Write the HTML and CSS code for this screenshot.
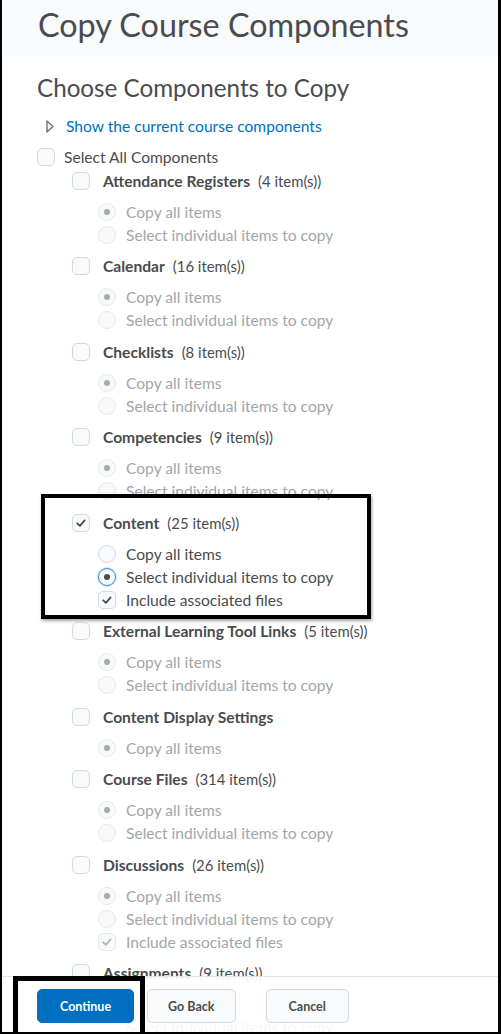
FILE: index.html
```html
<!DOCTYPE html>
<html lang="en">
<head>
  <meta charset="UTF-8">
  <title>Copy Course Components</title>
  <link rel="stylesheet" href="styles.css">
</head>
<body>
<div class="frame">

  <header class="page-head">
    <h1>Copy Course Components</h1>
  </header>

  <main class="page-body">
    <h2>Choose Components to Copy</h2>

    <div class="toggle">
      <svg class="tri" width="8" height="13" viewBox="0 0 8 13"><path d="M1 1 L7 6.5 L1 12 Z" fill="none" stroke="#6e7376" stroke-width="1.4" stroke-linejoin="round"/></svg>
      <a href="#">Show the current course components</a>
    </div>

    <div class="row select-all"><span class="cbox"></span>Select All Components</div>

    <ul class="components">
      <li class="comp">
        <div class="row head"><span class="cbox"></span><b>Attendance Registers</b><span class="count">(4 item(s))</span></div>
        <div class="opts">
          <div class="row opt off"><span class="radio dot"></span>Copy all items</div>
          <div class="row opt off"><span class="radio"></span>Select individual items to copy</div>
        </div>
      </li>
      <li class="comp">
        <div class="row head"><span class="cbox"></span><b>Calendar</b><span class="count">(16 item(s))</span></div>
        <div class="opts">
          <div class="row opt off"><span class="radio dot"></span>Copy all items</div>
          <div class="row opt off"><span class="radio"></span>Select individual items to copy</div>
        </div>
      </li>
      <li class="comp">
        <div class="row head"><span class="cbox"></span><b>Checklists</b><span class="count">(8 item(s))</span></div>
        <div class="opts">
          <div class="row opt off"><span class="radio dot"></span>Copy all items</div>
          <div class="row opt off"><span class="radio"></span>Select individual items to copy</div>
        </div>
      </li>
      <li class="comp">
        <div class="row head"><span class="cbox"></span><b>Competencies</b><span class="count">(9 item(s))</span></div>
        <div class="opts">
          <div class="row opt off"><span class="radio dot"></span>Copy all items</div>
          <div class="row opt off"><span class="radio"></span>Select individual items to copy</div>
        </div>
      </li>
      <li class="comp marked">
        <div class="row head"><span class="cbox ticked"></span><b>Content</b><span class="count">(25 item(s))</span></div>
        <div class="opts">
          <div class="row opt"><span class="radio"></span>Copy all items</div>
          <div class="row opt"><span class="radio dot chosen"></span>Select individual items to copy</div>
          <div class="row opt"><span class="cbox ticked"></span>Include associated files</div>
        </div>
      </li>
      <li class="comp">
        <div class="row head"><span class="cbox"></span><b>External Learning Tool Links</b><span class="count">(5 item(s))</span></div>
        <div class="opts">
          <div class="row opt off"><span class="radio dot"></span>Copy all items</div>
          <div class="row opt off"><span class="radio"></span>Select individual items to copy</div>
        </div>
      </li>
      <li class="comp">
        <div class="row head"><span class="cbox"></span><b>Content Display Settings</b></div>
        <div class="opts">
          <div class="row opt off"><span class="radio dot"></span>Copy all items</div>
        </div>
      </li>
      <li class="comp">
        <div class="row head"><span class="cbox"></span><b>Course Files</b><span class="count">(314 item(s))</span></div>
        <div class="opts">
          <div class="row opt off"><span class="radio dot"></span>Copy all items</div>
          <div class="row opt off"><span class="radio"></span>Select individual items to copy</div>
        </div>
      </li>
      <li class="comp">
        <div class="row head"><span class="cbox"></span><b>Discussions</b><span class="count">(26 item(s))</span></div>
        <div class="opts">
          <div class="row opt off"><span class="radio dot"></span>Copy all items</div>
          <div class="row opt off"><span class="radio"></span>Select individual items to copy</div>
          <div class="row opt off"><span class="cbox ticked"></span>Include associated files</div>
        </div>
      </li>
      <li class="comp">
        <div class="row head"><span class="cbox"></span><b>Assignments</b><span class="count">(9 item(s))</span></div>
        <div class="opts">
          <div class="row opt off"><span class="radio dot"></span>Copy all items</div>
          <div class="row opt off"><span class="radio"></span>Select individual items to copy</div>
        </div>
      </li>
    </ul>
  </main>

  <!-- sticky button bar, see-through like the original -->
  <footer class="actions">
    <button class="btn primary marked" type="button">Continue</button>
    <button class="btn back" type="button">Go Back</button>
    <button class="btn cancel" type="button">Cancel</button>
  </footer>

</div>
</body>
</html>
```

FILE: styles.css
```css
html, body {
   margin: 0;
   padding: 0;
   background: #fff;
}

body {
   font-family: Lato, "Open Sans", "Liberation Sans", sans-serif;
   color: #494c4e;
}

.frame {
   position: relative;
   box-sizing: border-box;
   height: 1034px;
   overflow: hidden;
   border-left: 2px solid #000;
   border-right: 3px solid #000;
   border-bottom: 2px solid #000;
}

/* title strip */
.page-head {
   height: 56px;
   padding-left: 36px;
   background: #f9fafb;
}

.page-head h1 {
   margin: 0;
   padding-top: 9px;
   font-size: 32.3px;
   line-height: 32px;
   font-weight: 400;
}

.page-body {
   padding-left: 35px;
}

.page-body h2 {
   margin: 17px 0 0 0;
   font-size: 24.2px;
   line-height: 30px;
   font-weight: 400;
}

.toggle {
   display: flex;
   align-items: center;
   height: 20px;
   margin-top: 13px;
   padding-left: 9px;
   font-size: 15.6px;
}

.toggle .tri {
   margin-right: 12px;
}

.toggle a {
   color: #006fbf;
   text-decoration: none;
}

/* generic row: box + label */
.row {
   display: flex;
   align-items: center;
   height: 23px;
   font-size: 15.6px;
   white-space: nowrap;
}

.select-all {
   margin-top: 9px;
}

.select-all .cbox {
   margin-right: 9px;
}

.cbox,
.radio {
   flex: none;
   box-sizing: border-box;
   width: 18px;
   height: 18px;
   border: 1px solid #d3d9e3;
   background: #f9fafb;
}

.cbox {
   border-radius: 5px;
}

.radio {
   border-radius: 50%;
   position: relative;
}

.radio.dot::after {
   content: "";
   position: absolute;
   left: 5px;
   top: 5px;
   width: 6px;
   height: 6px;
   border-radius: 50%;
   background: #494c4e;
}

.radio.chosen {
   border-color: #2f8fd6;
   box-shadow: 0 0 0 1px #cfe5f6;
}

.cbox.ticked {
   background: #f9fafb url("data:image/svg+xml;utf8,<svg xmlns='http://www.w3.org/2000/svg' width='16' height='16' viewBox='0 0 16 16'><path d='M4.2 8.3 L6.9 10.8 L11.6 5.4' fill='none' stroke='%23494c4e' stroke-width='1.8' stroke-linecap='round' stroke-linejoin='round'/></svg>") center / 16px no-repeat;
}

.components {
   list-style: none;
   margin: 1px 0 0;
   padding: 0 0 0 35px;
}

.comp {
   position: relative;
   padding-bottom: 8.5px;
}

.head .cbox {
   margin-right: 13px;
}

.head b {
   font-weight: 700;
}

.count {
   margin-left: 8px;
   font-size: 14.9px;
}

.opts {
   margin-top: 8px;
   padding-left: 26px;
}

.opt .radio,
.opt .cbox {
   margin-right: 10px;
}

/* disabled options */
.opt.off {
   color: #a3a6a9;
}

.opt.off .radio,
.opt.off .cbox {
   border-color: #e6e8eb;
   background-color: #f8f9fa;
}

.opt.off .radio.dot::after {
   background: #a8abae;
}

.opt.off .cbox.ticked {
   background-image: url("data:image/svg+xml;utf8,<svg xmlns='http://www.w3.org/2000/svg' width='16' height='16' viewBox='0 0 16 16'><path d='M4.2 8.3 L6.9 10.8 L11.6 5.4' fill='none' stroke='%23b4b7ba' stroke-width='1.8' stroke-linecap='round' stroke-linejoin='round'/></svg>");
}

/* black annotation frames drawn over the page */
.comp.marked::after {
   content: "";
   position: absolute;
   left: -31px;
   width: 330px;
   box-sizing: border-box;
   top: -17px;
   bottom: 1px;
   border: 4px solid #000;
   box-shadow: 1px 2px 3px rgba(0, 0, 0, 0.35);
   pointer-events: none;
}

.actions {
   position: absolute;
   left: 0;
   right: 0;
   bottom: 0;
   height: 56px;
   box-sizing: border-box;
   padding: 12px 0 0 35px;
   display: flex;
   align-items: flex-start;
   background: rgba(255, 255, 255, 0.9);
   border-top: 1px solid #e3e5e8;
}

.btn {
   position: relative;
   height: 34px;
   padding: 0 22px;
   margin-right: 13px;
   border: 1px solid #d3d9e3;
   border-radius: 5px;
   background: #f9fafb;
   color: #494c4e;
   font-family: Lato, "Open Sans", "Liberation Sans", sans-serif;
   font-size: 12.5px;
   font-weight: 700;
}

.btn.primary {
   background: #006fbf;
   border-color: #006fbf;
   color: #fff;
}

.btn.back {
   padding: 0 20px;
}

.btn.cancel {
   margin-left: 17px;
}

.btn.marked::after {
   content: "";
   position: absolute;
   left: -25px;
   right: -12px;
   top: -14px;
   bottom: -30px;
   border: 5px solid #000;
   pointer-events: none;
}
```
